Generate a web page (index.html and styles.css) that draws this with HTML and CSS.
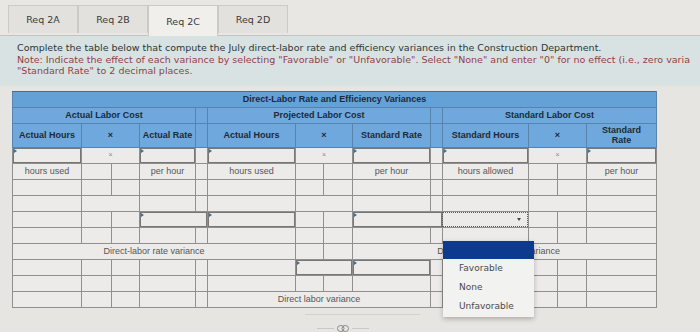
FILE: index.html
```html
<!DOCTYPE html>
<html>
<head>
<meta charset="utf-8">
<link rel="stylesheet" href="styles.css">
</head>
<body>
<div class="tabs">
  <div class="tab">Req 2A</div>
  <div class="tab">Req 2B</div>
  <div class="tab active">Req 2C</div>
  <div class="tab">Req 2D</div>
</div>
<div class="panel">
  <p class="lead">Complete the table below that compute the July direct-labor rate and efficiency variances in the Construction Department.</p>
  <p class="note">Note: Indicate the effect of each variance by selecting "Favorable" or "Unfavorable". Select "None" and enter "0" for no effect (i.e., zero varia<br>"Standard Rate" to 2 decimal places.</p>
</div>
<div class="wrap">
  <table class="grid">
    <colgroup>
      <col style="width:69px"><col style="width:30px"><col style="width:28px"><col style="width:56px"><col style="width:12px">
      <col style="width:88px"><col style="width:28px"><col style="width:29px"><col style="width:78px"><col style="width:12px">
      <col style="width:86px"><col style="width:29px"><col style="width:29px"><col style="width:70px">
    </colgroup>
    <tr class="h1"><th colspan="14">Direct-Labor Rate and Efficiency Variances</th></tr>
    <tr class="h2"><th colspan="4">Actual Labor Cost</th><th></th><th colspan="4">Projected Labor Cost</th><th></th><th colspan="4">Standard Labor Cost</th></tr>
    <tr class="h3"><th>Actual Hours</th><th colspan="2">×</th><th>Actual Rate</th><th></th><th>Actual Hours</th><th colspan="2">×</th><th>Standard Rate</th><th></th><th>Standard Hours</th><th colspan="2">×</th><th>Standard<br>Rate</th></tr>
    <tr><td class="inp"></td><td colspan="2" class="x">×</td><td class="inp"></td><td></td><td class="inp"></td><td colspan="2" class="x">×</td><td class="inp"></td><td></td><td class="inp"></td><td colspan="2" class="x">×</td><td class="inp"></td></tr>
    <tr><td class="lbl">hours used</td><td></td><td></td><td class="lbl">per hour</td><td></td><td class="lbl">hours used</td><td></td><td></td><td class="lbl">per hour</td><td></td><td class="lbl">hours allowed</td><td></td><td></td><td class="lbl">per hour</td></tr>
    <tr><td></td><td></td><td></td><td></td><td></td><td></td><td></td><td></td><td></td><td></td><td></td><td></td><td></td><td></td></tr>
    <tr><td></td><td colspan="2"></td><td></td><td></td><td></td><td colspan="2"></td><td></td><td></td><td></td><td colspan="2"></td><td></td></tr>
    <tr><td></td><td></td><td></td><td colspan="2" class="inp"></td><td class="inp"></td><td></td><td></td><td colspan="2" class="inp"></td><td class="sel"><div class="selbox"><span class="arrow"></span></div></td><td></td><td></td><td></td></tr>
    <tr><td></td><td></td><td></td><td></td><td></td><td></td><td></td><td></td><td></td><td></td><td></td><td></td><td></td><td></td></tr>
    <tr><td colspan="6" class="lbl">Direct-labor rate variance</td><td></td><td></td><td colspan="6" class="lbl shift">Direct-labor efficiency variance</td></tr>
    <tr><td></td><td></td><td></td><td></td><td></td><td></td><td colspan="2" class="inp"></td><td class="inp"></td><td></td><td></td><td></td><td></td><td></td></tr>
    <tr><td></td><td></td><td></td><td></td><td></td><td></td><td></td><td></td><td></td><td></td><td></td><td></td><td></td><td></td></tr>
    <tr><td></td><td></td><td></td><td></td><td></td><td colspan="4" class="lbl">Direct labor variance</td><td></td><td></td><td></td><td></td><td></td></tr>
  </table>
  <div class="dd">
    <div class="dd-hl"></div>
    <ul class="dd-list">
      <li>Favorable</li>
      <li>None</li>
      <li>Unfavorable</li>
    </ul>
  </div>
</div>
<div class="scrollline"></div>
<div class="linkrow">
  <span class="rule"></span>
  <svg width="12" height="7" viewBox="0 0 12 7"><rect x="0.5" y="0.5" width="6.5" height="6" rx="3" fill="none" stroke="#8a8a8a"/><rect x="5" y="0.5" width="6.5" height="6" rx="3" fill="none" stroke="#8a8a8a"/></svg>
  <span class="rule"></span>
</div>
</body>
</html>
```
FILE: styles.css
```css
html, body {
  margin: 0;
  padding: 0;
}
body {
  width: 700px;
  height: 332px;
  overflow: hidden;
  background: #e6e5e1;
  font-family: "DejaVu Sans", Verdana, sans-serif;
}
.tabs {
  display: flex;
  align-items: flex-start;
  padding: 5px 0 0 8px;
  height: 30px;
  background: #e8e7e3;
  border-bottom: 1px solid #c4c3bf;
}
.tab {
  width: 70px;
  height: 28px;
  box-sizing: border-box;
  border: 1px solid #cbcac6;
  border-bottom: none;
  background: #e2e1dd;
  color: #3a3a3a;
  font-size: 9.5px;
  display: flex;
  align-items: center;
  justify-content: center;
}
.tab.active {
  background: #f0efec;
  height: 31px;
}
.panel {
  background: #d9e2e3;
  padding: 6px 0 9px 17px;
  font-size: 9.5px;
  line-height: 11.5px;
  white-space: nowrap;
  overflow: hidden;
}
.panel p {
  margin: 0;
}
.lead {
  color: #2a3636;
}
.note {
  color: #8e4246;
}
.wrap {
  position: relative;
  margin: 5px 0 0 12px;
  width: 650px;
}
.grid {
  border-collapse: collapse;
  table-layout: fixed;
  width: 644px;
  font-family: "Liberation Sans", Arial, sans-serif;
}
.grid th {
  background: #6ea8dc;
  border: 1px solid #5883ac;
  color: #1d2a3a;
  font-size: 9px;
  font-weight: bold;
  padding: 0;
  line-height: 10px;
  text-align: center;
}
.grid tr.h1 th {
  background: #63a1d7;
  border-top-color: #4d6a86;
}
.grid tr.h1 { height: 16px; }
.grid tr.h2 { height: 16px; }
.grid tr.h3 { height: 24px; }
.grid tr { height: 16px; }
.grid td {
  border: 1px solid #8f8f8d;
  background: #ecebe9;
  padding: 0;
  font-size: 9px;
  color: #5a5a5a;
  text-align: center;
  line-height: 10px;
}
.grid td.inp {
  position: relative;
  box-shadow: inset 0 0 0 1px #767674;
}
.grid td.inp::before {
  content: "";
  position: absolute;
  left: 1px;
  top: 1px;
  border-top: 2px solid transparent;
  border-bottom: 2px solid transparent;
  border-left: 3px solid #3f6e98;
}
.grid td.x {
  color: #8a8a8a;
  font-size: 7px;
}
.grid td.lbl {
  color: #565656;
}
.grid td.shift {
  padding-right: 12px;
}
.grid td.sel {
  padding: 0;
}
.selbox {
  position: relative;
  height: 13px;
  border: 1px dotted #5a5a5a;
  margin: 0 0 0 -1px;
}
.arrow {
  position: absolute;
  right: 6px;
  top: 5px;
  border-left: 2.5px solid transparent;
  border-right: 2.5px solid transparent;
  border-top: 3px solid #444;
}
.dd {
  position: absolute;
  left: 431px;
  top: 150px;
  width: 91px;
  box-shadow: 0 2px 5px rgba(0, 0, 0, 0.25);
}
.dd-hl {
  height: 18px;
  background: #0c3a8d;
}
.dd-list {
  list-style: none;
  margin: 0;
  padding: 0 0 1px 16px;
  background: #f2f2f0;
  font-family: "DejaVu Sans", Verdana, sans-serif;
  font-size: 9px;
  line-height: 19px;
  color: #4a4a4a;
}
.scrollline {
  margin: 6px 0 0 305px;
  width: 115px;
  height: 1px;
  background: #d3d2ce;
}
.linkrow {
  display: flex;
  align-items: center;
  gap: 3px;
  margin: 10px 0 0 317px;
}
.rule {
  width: 17px;
  height: 1px;
  background: #c9c8c4;
}
```
